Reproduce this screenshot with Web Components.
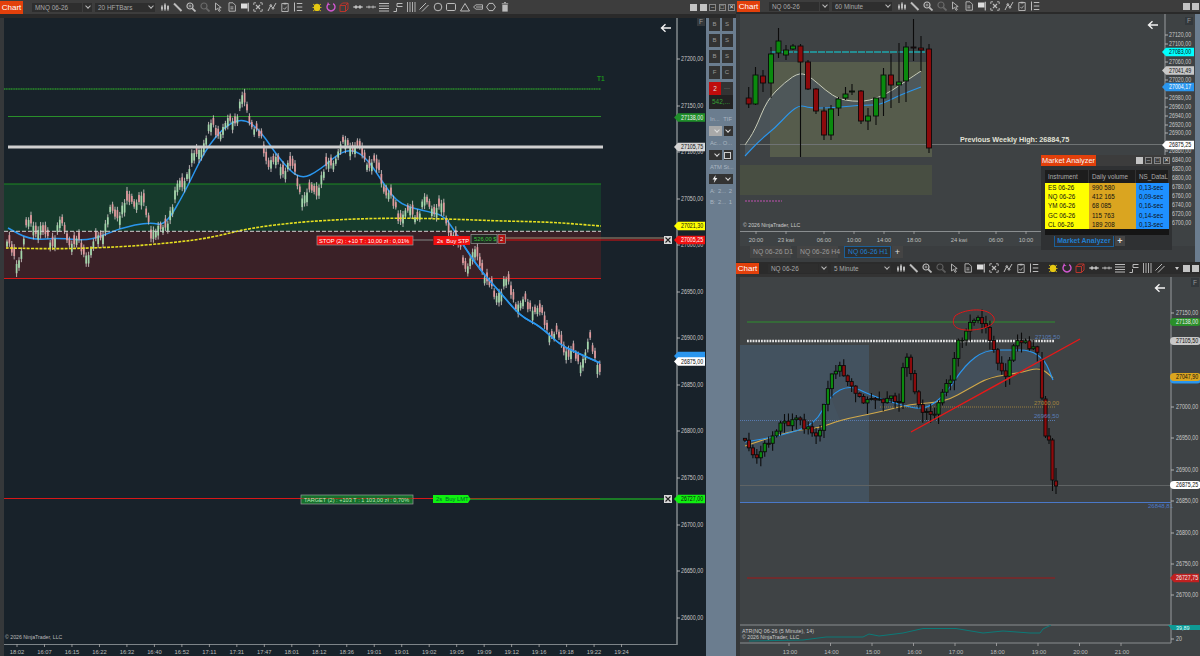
<!DOCTYPE html>
<html>
<head>
<meta charset="utf-8">
<title>Charts</title>
<style>
    html, body { margin: 0; padding: 0; background: #2a2a2a; overflow: hidden; }
    body { font-family: "Liberation Sans", Arial, sans-serif; }
</style>
</head>
<body>
<nt-desktop>
    <nt-window style="grid-row: 1 / 3" instrument="MNQ 06-26" interval="20 HFTBars" tools="all" buttons="full" bar="14" band="4">
        <nt-chart id="main"></nt-chart>
        <nt-trade-panel slot="side"></nt-trade-panel>
    </nt-window>
    <nt-window instrument="NQ 06-26" interval="60 Minute" tools="short" buttons="two" bar="12" band="2" start="1">
        <nt-chart id="hour"></nt-chart>
        <nt-tabs></nt-tabs>
        <nt-trade-panel slot="side" stub></nt-trade-panel>
    </nt-window>
    <nt-window instrument="NQ 06-26" interval="5 Minute" tools="all" buttons="drop" bar="12" band="3" dark>
        <nt-chart id="five"></nt-chart>
    </nt-window>
    <nt-market-analyzer slot="float"></nt-market-analyzer>
</nt-desktop>

<script>
const ICONS = {
    bars: `<path d="M2 3v6M5 1v8M8 3v6" stroke-width=".8"/><path d="M2 4.5v3M5 2.5v5M8 4v3.5" stroke-width="2"/>`,
    pencil: `<path d="M1 1.5l7.5 7.5" stroke-width="2"/>`,
    zoomin: `<circle cx="4" cy="4" r="3" stroke-width="1.2"/><path d="M6.3 6.3L9.5 9.5" stroke-width="1.8"/><path d="M2.5 4h3M4 2.5v3" stroke-width=".7"/>`,
    zoomout: `<g opacity=".35"><circle cx="4" cy="4" r="3" stroke-width="1.2"/><path d="M6.3 6.3L9.5 9.5" stroke-width="1.8"/></g>`,
    cursor: `<path d="M2.5 1v7l2-1.6 1.6 3 1.2-.7-1.5-2.8 2.4-.3z" stroke-width=".9"/>`,
    doc: `<path d="M2 .8h4l2.4 2.4v6H2zM3.4 5h3M3.4 6.8h3" stroke-width=".9"/>`,
    flag: `<path d="M1 1.5h6.5v5H1z" fill="#ddd" stroke="none"/><path d="M8.3 .8v8.7" stroke-width="1.2"/>`,
    snap: `<path d="M.8 3V.8H3M7 .8h2.2V3M.8 7v2.2H3M7 9.2h2.2V7" stroke-width=".9"/><path d="M3 3l4 4M7 3L3 7" stroke-width="1.2"/>`,
    zig: `<path d="M1 9L3.8 3.5 6 6.3 9 1" stroke-width="1"/><circle cx="3.8" cy="3.5" r=".9"/><circle cx="6" cy="6.3" r=".9"/>`,
    clip: `<path d="M1.8 1.5h6.4v8H1.8z" stroke-width=".9"/><path d="M3.5 .8h3v1.6h-3z" fill="#bbb" stroke="none"/><path d="M3.4 6l1.3 1.3 2-2.6" stroke-width=".8"/>`,
    list: `<path d="M1.5 .5v9" stroke-width="1"/><path d="M3.8 1.5h5.5M3.8 5h5.5M3.8 8.5h5.5" stroke-width="1.2"/>`,
    bug: `<ellipse cx="5" cy="5.4" rx="3.2" ry="3.6" fill="#e6c812" stroke="none"/><path d="M1 2l2 1.6M9 2L7 3.6M.5 5.5h2M9.5 5.5h-2M1 9l2-1.5M9 9L7 7.5" stroke="#e6c812" stroke-width=".8"/>`,
    ring: `<path d="M2.8 1.6a4 4 0 1 0 4.4 0" stroke="#d158d1" stroke-width="1.4"/><path d="M2 .4v2.2h2.2" stroke="#d158d1" stroke-width=".8"/>`,
    cube: `<path d="M1 3.5h5.5v6H1zM1 3.5L3.5 1H9v6L6.5 9.5M6.5 3.5L9 1" stroke="#b8352c" stroke-width="1"/>`,
    dotline: `<path d="M0 5h10" stroke-width="1"/><circle cx="3" cy="5" r="1.2" fill="#ccc"/><circle cx="7" cy="5" r="1.2" fill="#ccc"/>`,
    arrline: `<path d="M0 5h10" stroke-width="1"/><path d="M3 3.6v2.8M7 3.6v2.8" stroke-width="1"/>`,
    hlines: `<path d="M0 1.5h10M0 4h10M0 6.5h10M0 9h10" stroke-width="1.1"/>`,
    step: `<path d="M.5 9.5h3V6" stroke-width="1"/><path d="M4 4.5V1.5h5.5M4 4.5h5.5" stroke-width="1"/>`,
    vlines: `<path d="M1.5 0v10M4 0v10M6.5 0v10M9 0v10" stroke-width=".9"/>`,
    diag: `<path d="M.5 7.5L7 1M3 9.5L9.5 3" stroke-width="1"/>`,
    circle: `<circle cx="5" cy="5" r="3.8" stroke-width="1"/>`,
    rect: `<rect x=".5" y="1.5" width="9" height="7" rx="1.2" stroke-width="1"/>`,
    tri: `<path d="M5 1.5L9.5 9h-9z" stroke-width="1"/>`,
    tag: `<path d="M.5 5L3 2.8h6.5v4.4H3zM3 5h6.5" stroke-width=".9"/>`,
    hex: `<path d="M3 1.4h4L9.4 5 7 8.6H3L.6 5z" stroke-width="1"/>`,
    trash: `<path d="M2.3 2.8h5.4v6.8H2.3z" fill="#bbb" stroke="none"/><path d="M1.8 1.8h6.4M4 .6h2" stroke-width=".9"/>`
};
const GROUP_A = ["bars","pencil","zoomin","zoomout","cursor","doc","flag","snap","zig","clip","list"];
const GROUP_B = ["bug","ring","cube","dotline","arrline","hlines","step","vlines","diag"];
const GROUP_C = ["circle","rect","tri","tag","hex","trash"];

const iconSvg = n => `<svg class="ico" viewBox="0 0 10 10" fill="none" stroke="#bbb">${ICONS[n]}</svg>`;

class NtDesktop extends HTMLElement {
    constructor(){
        super();
        this.attachShadow({mode: "open"}).innerHTML = `
            <style>
                :host {
                    display: grid;
                    grid-template-columns: 736px 464px;
                    grid-template-rows: 262px 394px;
                    width: 1200px;
                    height: 656px;
                    position: relative;
                    overflow: hidden;
                }
                ::slotted(nt-market-analyzer) {
                    position: absolute;
                    left: 1041px;
                    top: 155px;
                }
            </style>
            <slot></slot><slot name="float"></slot>`;
    }
}

class NtToolbar extends HTMLElement {
    connectedCallback(){
        const tools = this.getAttribute("tools");
        const buttons = this.getAttribute("buttons");
        let icons = GROUP_A.map(iconSvg).join("");
        if (tools === "all"){
            let list = GROUP_B;
            if (buttons === "full") list = GROUP_B.concat(GROUP_C);
            icons += `<span class="sep"></span>` + list.map(iconSvg).join("");
        }
        let win = "";
        if (buttons === "full"){
            win = `<i class="sq"></i><i class="sq"></i><i class="wb">&#8211;</i><i class="wb">&#9633;</i><i class="wb">&#10005;</i>`;
        } else if (buttons === "two"){
            win = `<i class="sq"></i><i class="sq"></i>`;
        } else {
            win = `<span class="drop"></span><i class="sq"></i><i class="sq"></i>`;
        }
        this.attachShadow({mode: "open"}).innerHTML = `
            <style>
                :host {
                    display: flex;
                    align-items: center;
                    height: 100%;
                    padding-left: ${this.getAttribute("start") || 0}px;
                    background: var(--bar-bg, #3d3d3d);
                    font: 6.4px "Liberation Sans", Arial, sans-serif;
                    color: #a8a8a8;
                    overflow: hidden;
                }
                .chart {
                    width: 23px;
                    height: calc(100% - 1px);
                    display: flex;
                    align-items: center;
                    justify-content: center;
                    flex: none;
                    background: #e3400b;
                    color: #fff;
                    font-size: 8px;
                    margin-right: 9px;
                }
                .inst, .int, .v {
                    height: 9px;
                    line-height: 9px;
                    background: #2e2e2e;
                    flex: none;
                    box-sizing: border-box;
                }
                .inst { width: 50px; padding-left: 3px; }
                .v { width: 9px; margin-left: 1px; position: relative; }
                .int { width: 60px; margin-left: 3px; padding-left: 3px; position: relative; }
                .v::after, .int::after {
                    content: "";
                    position: absolute;
                    right: 2px;
                    top: 1.5px;
                    width: 3px;
                    height: 3px;
                    border: solid #bbb;
                    border-width: 0 1px 1px 0;
                    transform: rotate(45deg);
                }
                .ico { width: 10px; height: 10px; flex: none; margin: 0 1.7px; }
                .icons { display: flex; align-items: center; margin-left: 3px; }
                .sep { width: 5.6px; flex: none; }
                .win { margin-left: auto; display: flex; align-items: center; gap: 2.4px; padding-right: 1px; flex: none; }
                .sq { width: 7px; height: 7px; background: #c4c4c4; display: block; }
                .wb {
                    width: 7px; height: 7px; box-sizing: border-box; display: block;
                    border: 1px solid #888; background: #383838;
                    color: #ddd; font: 6px/5px "Liberation Sans", sans-serif; text-align: center;
                }
                .drop {
                    width: 0; height: 0;
                    border: 2.5px solid transparent; border-top: 3px solid #ccc; border-bottom: 0;
                    margin-right: 1px;
                }
            </style>
            <span class="chart">Chart</span>
            <span class="inst">${this.getAttribute("instrument")}</span>
            <span class="v"></span>
            <span class="int">${this.getAttribute("interval")}</span>
            <span class="icons">${icons}</span>
            <span class="win">${win}</span>`;
    }
}

class NtWindow extends HTMLElement {
    connectedCallback(){
        const bar = this.getAttribute("bar");
        const band = this.getAttribute("band");
        const dark = this.hasAttribute("dark");
        this.attachShadow({mode: "open"}).innerHTML = `
            <style>
                :host {
                    display: grid;
                    grid-template-rows: ${bar}px ${band}px 1fr;
                    min-height: 0;
                    overflow: hidden;
                    background: #35383a;
                    --bar-bg: ${dark ? "#2b2b2b" : "#3d3d3d"};
                }
                .band { background: ${dark ? "#333" : "#2a2a2a"}; }
                .body { display: flex; padding-left: 4px; min-height: 0; }
                .main { flex: 1; min-width: 0; display: flex; flex-direction: column; }
            </style>
            <nt-toolbar instrument="${this.getAttribute("instrument")}" interval="${this.getAttribute("interval")}"
                tools="${this.getAttribute("tools")}" buttons="${this.getAttribute("buttons")}" start="${this.getAttribute("start") || 0}"></nt-toolbar>
            <div class="band"></div>
            <div class="body">
                <div class="main"><slot></slot></div>
                <slot name="side"></slot>
            </div>`;
    }
}

class NtTradePanel extends HTMLElement {
    connectedCallback(){
        const root = this.attachShadow({mode: "open"});
        if (this.hasAttribute("stub")){
            root.innerHTML = `<style>:host{display:block;width:5px;flex:none;background:#6b7d8f;}</style>`;
            return;
        }
        const pairs = [["B","S"],["B","S"],["B","S"],["F","C"]];
        root.innerHTML = `
            <style>
                :host {
                    display: flex;
                    flex-direction: column;
                    width: 30px;
                    flex: none;
                    box-sizing: border-box;
                    padding: 0 3px 0 3px;
                    background: #6b7d8f;
                    font: 5.8px "Liberation Sans", Arial, sans-serif;
                    color: #aab6c1;
                }
                .pair { display: grid; grid-template-columns: 11px 11px; gap: 1.5px; margin-bottom: 3px; }
                .pair span {
                    height: 13px; line-height: 13px; background: #333; color: #999;
                    text-align: center; font-size: 6px;
                }
                .pos { display: grid; grid-template-columns: 12px 12px; grid-template-rows: 13px 14px; margin-top: 0; background: #222; }
                .pos b { background: #c00c0c; color: #ddd; font-weight: normal; text-align: center; line-height: 13px; font-size: 6.5px; }
                .pos i { color: #777; font-style: normal; text-align: center; line-height: 13px; background: #333; }
                .pos em { grid-column: 1 / 3; color: #35a035; font-style: normal; font-size: 6.5px; line-height: 14px; padding-left: 3px; }
                .lab { display: flex; justify-content: space-between; height: 8px; line-height: 8px; padding: 0 1px; white-space: nowrap; }
                .row { display: flex; gap: 2px; height: 10px; }
                .sel { position: relative; background: #333; flex: 1; }
                .sel.light { background: #a9a9a9; flex: none; width: 13px; }
                .sel.small { flex: none; width: 9px; }
                .sel::after {
                    content: ""; position: absolute; right: 3px; top: 2px; width: 3px; height: 3px;
                    border: solid #ddd; border-width: 0 1px 1px 0; transform: rotate(45deg);
                }
                .sel.calc::after {
                    right: 2px; top: 1.5px; width: 5px; height: 5px;
                    border: 1px solid #ccc; transform: none;
                }
                .bolt { width: 6px; height: 8px; position: absolute; left: 3px; top: 1px; }
            </style>
            ${pairs.map(p => `<div class="pair"><span>${p[0]}</span><span>${p[1]}</span></div>`).join("")}
            <div class="pos"><b>2</b><i>---</i><em>542,...</em></div>
            <div class="lab" style="margin-top:6px"><span>In...</span><span>TIF</span></div>
            <div class="row" style="margin-top:3px"><div class="sel light"></div><div class="sel small"></div></div>
            <div class="lab" style="margin-top:3px"><span>Ac...</span><span>O...</span></div>
            <div class="row" style="margin-top:3px"><div class="sel" style="flex:none;width:13px"></div><div class="sel small calc"></div></div>
            <div class="lab" style="margin-top:3px"><span>ATM St...</span></div>
            <div class="row" style="margin-top:3px"><div class="sel"><svg class="bolt" viewBox="0 0 6 8"><path d="M3.6 0L.6 4.4h2L1.8 8l3.6-5H3.2z" fill="#eee"/></svg></div></div>
            <div class="lab" style="margin-top:3px"><span>A:</span><span>2...</span><span>2</span></div>
            <div class="lab" style="margin-top:3px"><span>B:</span><span>2...</span><span>1</span></div>`;
    }
}

class NtTabs extends HTMLElement {
    constructor(){
        super();
        const tabs = ["NQ 06-26 D1","NQ 06-26 H4","NQ 06-26 H1"];
        this.attachShadow({mode: "open"}).innerHTML = `
            <style>
                :host {
                    display: flex;
                    align-items: flex-start;
                    height: 16px;
                    flex: none;
                    gap: 1px;
                    padding-left: 10px;
                    background: #3a3d3f;
                    font: 6.8px "Liberation Sans", Arial, sans-serif;
                    color: #9a9a9a;
                }
                span {
                    height: 12px; line-height: 12px; padding: 0 3px; width: 41px; box-sizing: border-box;
                    background: #444; text-align: center; white-space: nowrap; margin-right: 5px;
                }
                .on { background: #2c2f31; color: #1f7fd0; border: 1px solid #1b5f99; line-height: 10px; width: 47px; margin-right: 0; }
                .plus { width: 11px; padding: 0; color: #ddd; font-size: 9px; }
            </style>
            ${tabs.map((t, i) => `<span class="${i === 2 ? "on" : ""}">${t}</span>`).join("")}<span class="plus">+</span>`;
    }
}

class NtMarketAnalyzer extends HTMLElement {
    constructor(){
        super();
        const rows = [
            ["ES 06-26","990 580","0,13-sec"],
            ["NQ 06-26","412 165","0,09-sec"],
            ["YM 06-26","68 085","0,16-sec"],
            ["GC 06-26","115 763","0,14-sec"],
            ["CL 06-26","189 208","0,13-sec"]
        ];
        this.attachShadow({mode: "open"}).innerHTML = `
            <style>
                :host {
                    display: block;
                    width: 131px;
                    height: 95px;
                    background: #2f3133;
                    font: 6.3px "Liberation Sans", Arial, sans-serif;
                    color: #111;
                }
                .head { display: flex; height: 11px; background: #3c3c3c; align-items: center; }
                .title { width: 55px; height: 11px; line-height: 11px; background: #e3400b; color: #f4f4f4; font-size: 7.4px; text-align: center; white-space: nowrap; }
                .btns { margin-left: auto; display: flex; gap: 2px; padding-right: 2px; }
                .btns i { width: 7px; height: 7px; display: block; box-sizing: border-box; border: 1px solid #888; background: #383838; color: #ddd; font: 6px/5px "Liberation Sans", sans-serif; text-align: center; font-style: normal; }
                .btns i:first-child { background: #c4c4c4; border: 0; }
                .grid {
                    display: grid;
                    grid-template-columns: 44px 47px 33px;
                    grid-auto-rows: 9.2px;
                    margin: 4px 3px 0 4px;
                    background: #151515;
                }
                .grid div { line-height: 9.2px; padding-left: 3px; white-space: nowrap; overflow: hidden; }
                .th { background: #1d1d1d; color: #aaa; height: 13px; line-height: 13px !important; border-right: 1px solid #333; }
                .a { background: #ffff00; }
                .b { background: #daa520; }
                .c { background: #1e90ff; }
                .foot { height: 6px; margin: 0 3px 0 4px; background: #151515; }
                .tabs { display: flex; margin: 1px 0 0 13px; }
                .tabs span { height: 11px; line-height: 10px; width: 60px; box-sizing: border-box; border: 1px solid #1b5f99; border-top: 0; color: #1f7fd0; text-align: center; font-size: 7px; font-weight: bold; white-space: nowrap; }
                .tabs b { width: 10px; height: 10px; line-height: 10px; margin-left: 1px; background: #454545; color: #ddd; text-align: center; font-size: 9px; }
            </style>
            <div class="head"><span class="title">Market Analyzer</span><span class="btns"><i></i><i>&#8211;</i><i>&#9633;</i><i>&#10005;</i></span></div>
            <div class="grid" style="grid-template-rows:13px">
                <div class="th">Instrument</div><div class="th">Daily volume</div><div class="th">NS_DataL</div>
                ${rows.map(r => `<div class="a">${r[0]}</div><div class="b">${r[1]}</div><div class="c">${r[2]}</div>`).join("")}
            </div>
            <div class="foot"></div>
            <div class="tabs"><span>Market Analyzer</span><b>+</b></div>`;
    }
}

class NtChart extends HTMLElement {
    constructor(){
        super();
        this._shadowDOM = this.attachShadow({mode: "open"});
    }

    set scene(s){
        this._shadowDOM.innerHTML = `
            <style>
                :host { display: block; flex: 1; min-height: 0; background: ${s.bg}; overflow: hidden; }
                svg { display: block; width: 100%; height: 100%; }
                text { font-family: "Liberation Sans", Arial, sans-serif; }
            </style>
            <svg viewBox="${s.box.join(" ")}" preserveAspectRatio="none">${s.draw()}</svg>`;
    }
}

/* drawing helpers, page coordinates */
const ln = (x1, y1, x2, y2, c, w = 1, dash = "") =>
    `<line x1="${x1}" y1="${y1}" x2="${x2}" y2="${y2}" stroke="${c}" stroke-width="${w}" ${dash ? `stroke-dasharray="${dash}"` : ""}/>`;
const box = (x, y, w, h, fill, stroke = "none") =>
    `<rect x="${x}" y="${y}" width="${w}" height="${h}" fill="${fill}" stroke="${stroke}" stroke-width=".7"/>`;
const txt = (x, y, s, c, size = 6, extra = "") =>
    `<text x="${x}" y="${y}" fill="${c}" font-size="${size}" ${extra}>${s}</text>`;
const poly = (pts, c, w = 1, dash = "") =>
    `<polyline points="${pts.map(p => p.join(",")).join(" ")}" fill="none" stroke="${c}" stroke-width="${w}" stroke-linejoin="round" ${dash ? `stroke-dasharray="${dash}"` : ""}/>`;
const smooth = pts => {
    let d = `M${pts[0][0]} ${pts[0][1]}`;
    for (let i = 1; i < pts.length; i++){
        const mx = (pts[i-1][0] + pts[i][0]) / 2, my = (pts[i-1][1] + pts[i][1]) / 2;
        d += ` Q${pts[i-1][0]} ${pts[i-1][1]} ${mx} ${my}`;
    }
    return d + ` L${pts[pts.length-1][0]} ${pts[pts.length-1][1]}`;
};
const curve = (pts, c, w = 1, dash = "") =>
    `<path d="${smooth(pts)}" fill="none" stroke="${c}" stroke-width="${w}" ${dash ? `stroke-dasharray="${dash}"` : ""}/>`;
// axis digits in the reference are tall and narrow, so squeeze them sideways
const axisLabel = (x, y, s, c = "#c8c8c8") =>
    `<text transform="translate(${x} ${y + 2}) scale(.83 1)" fill="${c}" font-size="6.4">${s}</text>`;
const marker = (x0, x1, y, s, fill, c, lx, round = false) => {
    const shape = round
        ? `<rect x="${x0}" y="${y - 4}" width="${x1 - x0 + 4}" height="8" rx="4" fill="${fill}"/>`
        : `<polygon points="${x0},${y} ${x0 + 4},${y - 4.3} ${x1},${y - 4.3} ${x1},${y + 4.3} ${x0 + 4},${y + 4.3}" fill="${fill}"/>`;
    return shape + (s ? axisLabel(lx, y, s, c) : "");
};
const arrow = (x, y) =>
    `<path d="M${x + 5} ${y}H${x - 4.5}M${x - .5} ${y - 3.8}L${x - 4.5} ${y}L${x - .5} ${y + 3.8}" fill="none" stroke="#f2f2f2" stroke-width="1.4"/>`;
const fBtn = (x, y, h = 8) =>
    box(x, y, 8, h, "#33383c") + txt(x + 2, y + h - 2, "F", "#999", 6.5);
const xBox = (x, y) =>
    box(x, y, 8, 8, "#d8d8d8") + `<path d="M${x + 1.5} ${y + 1.5}l5 5M${x + 6.5} ${y + 1.5}l-5 5" stroke="#222" stroke-width="1.1"/>`;

function pathY(pts, x){
    for (let i = 1; i < pts.length; i++){
        if (x <= pts[i][0]){
            const a = pts[i-1], b = pts[i];
            return a[1] + (b[1] - a[1]) * (x - a[0]) / (b[0] - a[0]);
        }
    }
    return pts[pts.length-1][1];
}

function rng(seed){
    let s = seed;
    return () => { s = (s * 16807) % 2147483647; return s / 2147483647; };
}

function candle(x, top, bot, hi, lo, up, bw = 5){
    const fill = up ? "#0a8a0e" : "#8c0a0c";
    return ln(x, hi, x, lo, "#0b0b0b", 1.1) +
        `<rect x="${x - bw/2}" y="${top}" width="${bw}" height="${Math.max(bot - top, 1)}" fill="${fill}" stroke="#0b0b0b" stroke-width=".9"/>`;
}

/* left chart */
const mainPrice = [[6,235],[17,268],[26,228],[38,226],[50,242],[60,226],[72,240],[90,255],[100,236],[110,216],[118,212],[130,202],[140,196],[150,226],[162,236],[170,212],[185,176],[195,160],[205,140],[215,126],[225,132],[235,116],[243,102],[255,126],[265,152],[280,170],[290,162],[305,200],[320,182],[335,156],[350,142],[365,156],[380,172],[395,210],[410,216],[425,206],[438,206],[450,226],[465,262],[480,258],[495,300],[505,282],[520,306],[535,306],[550,330],[565,346],[580,364],[590,342],[599,370]];
const mainBlue = [[8,228],[30,240],[60,238],[90,241],[120,228],[150,222],[165,226],[185,192],[205,150],[225,126],[243,118],[260,130],[280,160],[300,180],[320,170],[345,148],[365,155],[385,186],[400,205],[430,212],[445,216],[460,240],[480,270],[500,292],[520,316],[540,326],[560,345],[580,354],[600,363]];
const mainYellow = [[6,248],[60,249],[120,247],[170,243],[210,238],[250,228],[300,222],[350,219],[400,218],[450,219],[500,221],[550,222],[601,226]];

function drawMain(){
    const r = rng(4711);
    const wave = x => pathY(mainPrice, x) + 7 * Math.sin(x * .38) * Math.min(1, (601 - x) / 12) + 3 * Math.sin(x * 1.17);
    let s = "";
    s += box(4, 184, 597, 47, "#163a2c");
    s += box(4, 231, 597, 47, "#3a2127");
    s += ln(4, 89, 601, 89, "#2a8f2a", 1.3, "1.2 .5");
    s += ln(8, 116.5, 601, 116.5, "#2a8f2a", 1.2);
    s += ln(4, 184, 601, 184, "#1c8a20", 1);
    s += ln(4, 278.5, 601, 278.5, "#d81818", 1);
    s += txt(597, 81, "T1", "#1c8f1c", 6.5, 'font-weight="bold"');
    let bars = "";
    for (let x = 7; x < 601; x += 2.4){
        const y = wave(x);
        const next = wave(x + 2.4);
        const h = 4.5 + r() * 4.5;
        bars += ln(x, y - h, x, y + h, "#c9c2c2", .9);
        bars += box(x - .85, y - h * .55, 1.7, h * 1.1, next < y ? "#a2d6aa" : "#e0989c");
    }
    s += curve(mainBlue, "#2a96ee", 1.5);
    s += bars;
    s += ln(8, 147, 603, 147, "#cfcfcf", 3.2);
    s += curve(mainYellow, "#e6e020", 1.6, "3 1.2");
    s += curve(mainBlue.slice(21), "#2a96ee", 1.5);
    s += ln(4, 231.3, 601, 231.3, "#d0d0d0", 1, "4 2");

    /* stop order row */
    s += ln(413, 240, 433, 240, "#777", 1.2);
    s += ln(505, 238, 664, 238, "#a58a70", 1);
    s += ln(505, 240, 664, 240, "#e01010", 1.2);
    s += box(317, 236, 96, 9, "#f01010", "#999");
    s += txt(319, 242.6, "STOP (2) : +10 T : 10,00 z&#322; : 0,01%", "#fff", 5.8);
    s += box(433.5, 236, 36.5, 9, "#f01010");
    s += txt(437, 242.6, "2s&#160;&#160;Buy STP", "#fff", 5.8);
    s += box(471, 234.5, 26, 9, "#1f2a22", "#999");
    s += txt(474, 241, "526,00 $", "#3fc43f", 5.8);
    s += box(498, 234.5, 7.5, 9, "#b01010", "#999");
    s += txt(500, 241, "2", "#ddd", 6);
    s += xBox(664, 236);

    /* target order row */
    s += ln(4, 498.5, 433, 498.5, "#d81818", 1);
    s += ln(470, 499, 664, 499, "#1c9a24", 1.6);
    s += ln(470, 498.5, 600, 498.5, "#b03018", .8);
    s += box(301, 495, 112, 9, "#15702c", "#999");
    s += ln(301, 498.5, 413, 498.5, "#d81818", .6);
    s += txt(304, 501.6, "TARGET (2) : +103 T : 1 103,00 z&#322; : 0,70%", "#b8e8b8", 5.6);
    s += `<polygon points="433,495 468,495 470.5,499 468,503 433,503" fill="#10f010"/>`;
    s += txt(436, 501.2, "2s&#160;&#160;Buy LMT", "#063", 5.8);
    s += xBox(664, 495);

    s += arrow(666, 28);
    s += txt(5, 639, "&#169; 2026 NinjaTrader, LLC", "#bbb", 5.2);

    /* price axis */
    s += ln(677, 18, 677, 645, "#7d8488", 1.6);
    s += ln(4, 644.5, 677, 644.5, "#7d8488", 1);
    s += fBtn(697, 18);
    for (let p = 27200, y = 59; p >= 26600; p -= 50, y += 46.55){
        const yy = Math.round(y);
        s += ln(677, yy, 680, yy, "#c8c8c8", .8);
        s += axisLabel(681, yy, p.toFixed(0) + ",00");
    }
    s += marker(674, 705, 117.5, "27138,00", "#1f8f2a", "#eee", 681);
    s += marker(674, 705, 147, "27105,75", "#d4d4d4", "#111", 681);
    s += marker(674, 705, 226, "27021,30", "#ffff00", "#111", 681);
    s += marker(674, 705, 240, "27005,25", "#f01010", "#fff", 681);
    s += marker(674, 705, 356, "", "#2a96ee", "#fff", 681);
    s += marker(674, 705, 361.5, "26875,00", "#ffffff", "#111", 681);
    s += marker(674, 705, 499, "26727,00", "#10f010", "#111", 681);

    /* time axis */
    const times = ["18:02","16:07","16:15","16:22","16:32","16:40","16:52","17:11","17:31","17:47","18:01","18:12","18:36","19:01","19:01","19:02","19:05","19:09","19:12","19:16","19:18","19:22","19:24"];
    times.forEach((t, i) => {
        const x = 17 + i * 27.48;
        s += ln(x, 644, x, 647, "#aaa", .8);
        s += `<text x="${x}" y="654" fill="#bdbdbd" font-size="5.8" text-anchor="middle">${t}</text>`;
    });
    return s;
}

/* top right chart */
const hourCandles = [
    [748.7,98,104,87,108,0],[755.5,75,104,67,105,1],[763,76,83,70,92,0],[771,54,83,47,98,1],
    [778.5,41,53,28,58,1],[786,50,55,45,60,1],[793,46,49,44,50,1],[800.5,46,62,44,157,0],
    [808,62,89,60,90,0],[816,89,111,88,114,0],[824,111,135,107,140,0],[831,109,135,105,140,1],
    [838.5,99,108,97,116,1],[845.5,94,98,87,100,1],[852,91,92,84,95,1],[861,91,121,90,124,0],
    [868,116,121,108,130,1],[876,98,116,98,125,1],[883.5,75,98,68,116,1],[891,75,85,54,108,0],
    [899,82,85,43,103,1],[906,47,81,42,102,1],[913.5,47,48,19,61,0],[921,48,50,36,71,0],[929,49,148,44,153,0]
];
const hourWhite = [[745,145],[755,130],[767,100],[785,82],[800,72],[812,78],[825,90],[840,100],[865,102],[885,95],[900,85],[915,75],[921,71]];
const hourBlue = [[745,156],[760,140],[775,128],[790,112],[800,105],[810,108],[830,108],[850,106],[865,105],[880,105],[900,95],[921,87]];

function drawHour(){
    let s = "";
    s += box(770, 62, 162, 95, "#565c4c");
    s += box(740, 165, 192, 30, "#484e42");
    const band = hourWhite.concat(hourBlue.slice().reverse());
    s += `<path d="M${band.map(p => p.join(" ")).join("L")}Z" fill="#4c565c" opacity=".85"/>`;
    s += ln(740, 144.5, 1165, 144.5, "#6f7374", 1);
    s += ln(770, 52, 925, 52, "#1fa6ac", 1.3, "7 1");
    s += ln(745, 201, 782, 201, "#c050b0", 1.2, "2 1");
    s += curve(hourWhite, "#c8ccb8", 1);
    s += curve(hourBlue, "#2a96ee", 1.1);
    hourCandles.forEach(c => { s += candle(c[0], c[1], c[2], c[3], c[4], c[5]); });
    s += txt(960, 142, "Previous Weekly High: 26884,75", "#e2e2d8", 7.2, 'font-weight="bold"');
    s += arrow(1153, 25);
    s += txt(743, 227, "&#169; 2026 NinjaTrader, LLC", "#ccc", 5.2);

    s += ln(1165, 14, 1165, 233, "#8a8e90", 1.2);
    s += ln(740, 231.5, 1165, 231.5, "#8a8e90", 1);
    s += fBtn(1185, 17);
    const covered = [27080, 27040, 27000, 26880];
    for (let p = 27120; p >= 26700; p -= 20){
        const y = Math.round(35 + (27120 - p) * .4475);
        s += ln(1165, y, 1168, y, "#c8c8c8", .8);
        if (!covered.includes(p)) s += axisLabel(1169, y, p + ",00");
    }
    s += marker(1162, 1194, 52, "27083,00", "#00ffff", "#111", 1169);
    s += marker(1162, 1194, 70.5, "27041,49", "#c8c8c8", "#111", 1169);
    s += marker(1162, 1194, 87, "27004,17", "#2a96ee", "#fff", 1169);
    s += marker(1162, 1194, 145, "26875,25", "#ffffff", "#111", 1169);

    [[756,"20:00"],[786,"23 kwi"],[824,"06:00"],[854,"10:00"],[884,"14:00"],[914,"18:00"],[959,"24 kwi"],[996,"06:00"],[1026,"10:00"]].forEach(t => {
        s += ln(t[0], 231, t[0], 234, "#aaa", .8);
        s += `<text x="${t[0]}" y="242" fill="#bdbdbd" font-size="5.8" text-anchor="middle">${t[1]}</text>`;
    });
    return s;
}

/* bottom right chart */
const fivePrice = [[746,440],[752,450],[758,458],[765,445],[775,430],[785,425],[795,420],[805,425],[815,440],[820,430],[825,395],[832,370],[840,365],[848,385],[858,395],[865,405],[870,395],[880,400],[890,395],[900,405],[903,370],[908,355],[915,395],[925,415],[932,415],[940,400],[950,380],[958,345],[965,330],[975,318],[985,325],[990,345],[995,355],[1002,375],[1008,370],[1015,345],[1025,340],[1035,350],[1040,358]];
const fiveBlue = [[745,442],[780,436],[815,425],[830,395],[850,385],[870,395],[900,405],[925,410],[945,395],[965,365],[985,350],[1010,350],[1030,350],[1045,360],[1053,380]];
const fiveGold = [[745,446],[790,431],[820,428],[840,420],[880,412],[910,404],[945,402],[970,388],[990,377],[1020,373],[1040,367],[1053,378]];
const atr = [[749,641],[803,640],[826,637],[863,637],[869,634],[879,636],[903,633],[923,628.5],[956,628.5],[983,633],[1003,631],[1030,633],[1040,633],[1043,629],[1051,625]];
const fiveDrop = [[1042,360,398,352,400],[1045.5,399,436,396,438],[1049,436,440,428,444],[1052.5,440,480,438,491],[1056,481,486,468,494]];

function drawFive(){
    const r = rng(90210);
    let s = "";
    s += box(740, 345, 129, 157, "#43525f");
    const band = fiveBlue.concat(fiveGold.slice().reverse()).filter(p => p[0] >= 830);
    s += `<path d="M${band.map(p => p.join(" ")).join("L")}Z" fill="#434f5a"/>`;
    s += ln(747, 322, 1055, 322, "#2f8f2f", 1.2);
    s += ln(747, 578, 1055, 578, "#a01818", 1.2);
    s += ln(740, 485.5, 1171, 485.5, "#5f6364", 1);
    s += ln(740, 502.5, 1171, 502.5, "#4a78c8", 1.2);
    s += ln(880, 407, 1056, 407, "#a5873f", .9, "1 1");
    s += ln(740, 420.5, 1056, 420.5, "#5a7fb8", .9, "1 1");
    s += curve(fiveGold, "#d2a94a", 1.1);
    s += curve(fiveBlue, "#2a96ee", 1.2);
    s += ln(747, 341, 1055, 341, "#e4e4e4", 2.6, "1.8 1");
    let prev = pathY(fivePrice, 745);
    for (let x = 745; x <= 1040; x += 3.95){
        const close = pathY(fivePrice, x) + (r() - .5) * 9;
        const top = Math.min(prev, close), bot = Math.max(prev, close);
        const up = close < prev;
        s += candle(x, top, bot, top - r() * 8, bot + r() * 11, up, 3.2);
        prev = close;
    }
    fiveDrop.forEach(c => { s += candle(c[0], c[1], c[2], c[3], c[4], false, 3.2); });
    s += txt(1034, 404.5, "27000,00", "#a5873f", 6);
    s += txt(1034, 418, "26966,50", "#5a7fb8", 6);
    s += txt(1035, 339, "27105,50", "#5a7fb8", 6);
    s += txt(1148, 507.5, "26848,81", "#4a78c8", 6);
    s += poly([[911,432],[1080,339]], "#e81818", 1.4);
    s += `<path d="M955 316C962 310 985 306 993 316C998 323 988 329 972 330C956 331 950 325 955 316Z" fill="none" stroke="#e01818" stroke-width="1"/>`;
    s += arrow(1160, 288);

    /* price axis */
    s += ln(1171, 277, 1171, 643, "#8a8e90", 1.2);
    s += fBtn(1191, 278, 9);
    [[27150,313],[27000,407],[26950,438],[26900,470],[26850,501],[26800,533],[26750,564],[26700,595]].forEach(t => {
        s += ln(1171, t[1], 1174, t[1], "#c8c8c8", .8);
        s += axisLabel(1176, t[1], t[0] + ",00");
    });
    s += marker(1170, 1197, 322, "27138,00", "#2a8f2a", "#eee", 1176, true);
    s += marker(1170, 1197, 341, "27105,50", "#c8c8c8", "#111", 1176, true);
    s += marker(1170, 1197, 379.5, "", "#2a96ee", "#fff", 1176, true);
    s += marker(1170, 1197, 377, "27047,90", "#daa520", "#111", 1176, true);
    s += marker(1170, 1197, 485, "26875,25", "#ffffff", "#111", 1176, true);
    s += marker(1170, 1199, 578, "26727,75", "#c02020", "#eee", 1176);

    /* ATR pane */
    s += `<clipPath id="atrClip"><rect x="740" y="625" width="431" height="18"/></clipPath>`;
    s += ln(740, 625, 1171, 625, "#8a8e90", 1);
    s += `<g clip-path="url(#atrClip)">${poly(atr, "#0c7a78", 1)}</g>`;
    s += txt(742, 632.8, "ATR(NQ 06-26 (5 Minute), 14)", "#c8c8c8", 5.4);
    s += txt(742, 639, "&#169; 2026 NinjaTrader, LLC", "#c8c8c8", 5.2);
    s += ln(740, 643, 1171, 643, "#8a8e90", 1);
    s += `<polygon points="1168,625 1200,625 1200,630 1172,630" fill="#0f9a95"/>`;
    s += txt(1176, 629.6, "39,89", "#dff", 5.4);
    s += ln(1171, 639, 1174, 639, "#c8c8c8", .8);
    s += axisLabel(1176, 638.5, "20");

    ["13:00","14:00","15:00","16:00","17:00","18:00","19:00","20:00","21:00"].forEach((t, i) => {
        const x = 790 + i * 41.5;
        s += ln(x - 1, 643, x - 1, 646, "#aaa", .8);
        s += `<text x="${x}" y="654" fill="#bdbdbd" font-size="5.8" text-anchor="middle">${t}</text>`;
    });
    return s;
}

customElements.define("nt-desktop", NtDesktop);
customElements.define("nt-toolbar", NtToolbar);
customElements.define("nt-window", NtWindow);
customElements.define("nt-trade-panel", NtTradePanel);
customElements.define("nt-tabs", NtTabs);
customElements.define("nt-market-analyzer", NtMarketAnalyzer);
customElements.define("nt-chart", NtChart);

document.getElementById("main").scene = {bg: "#18222a", box: [4, 18, 702, 638], draw: drawMain};
document.getElementById("hour").scene = {bg: "#3e4244", box: [740, 14, 455, 232], draw: drawHour};
document.getElementById("five").scene = {bg: "#3f4345", box: [740, 277, 460, 379], draw: drawFive};
</script>
</body>
</html>
